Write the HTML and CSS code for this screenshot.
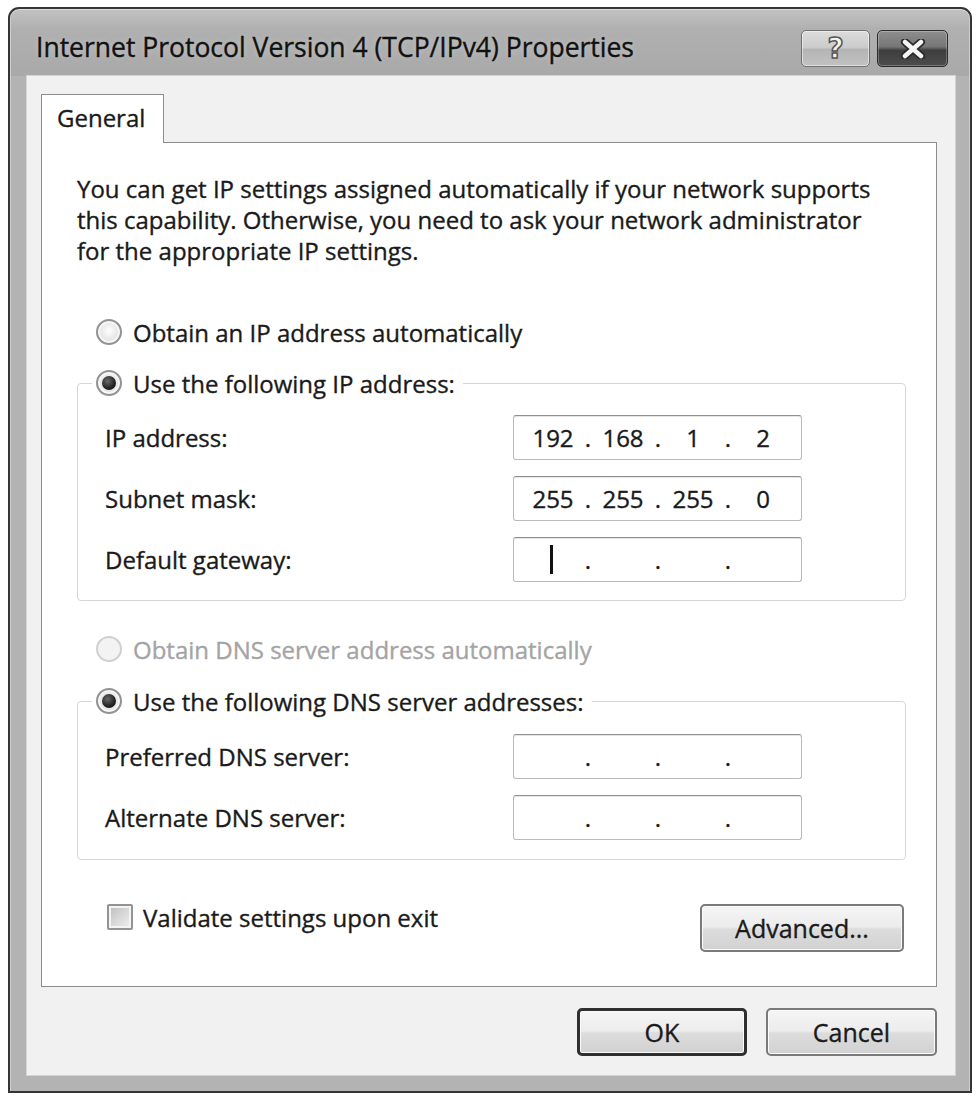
FILE: index.html
```html
<!DOCTYPE html>
<html lang="en">
<head>
<meta charset="utf-8">
<title>Internet Protocol Version 4 (TCP/IPv4) Properties</title>
<link rel="stylesheet" href="styles.css">
</head>
<body>
<div class="window">
  <div class="titlebar">
    <div class="title">Internet Protocol Version 4 (TCP/IPv4) Properties</div>
    <div class="caption-btns">
      <div class="cap help"><span class="qmark">?</span></div>
      <div class="cap close">
        <svg width="26" height="20" viewBox="0 0 26 20">
          <path d="M5 3 L21 17 M21 3 L5 17" stroke="#2a2a2a" stroke-width="8" stroke-linecap="round" fill="none"/>
          <path d="M5 3 L21 17 M21 3 L5 17" stroke="#f4f4f4" stroke-width="4.5" stroke-linecap="round" fill="none"/>
        </svg>
      </div>
    </div>
  </div>
  <div class="client">
    <div class="tabs"><div class="tab">General</div></div>
    <div class="panel">
      <p class="intro">You can get IP settings assigned automatically if your network supports<br>this capability. Otherwise, you need to ask your network administrator<br>for the appropriate IP settings.</p>

      <div class="radio-row first"><span class="radio"></span><span>Obtain an IP address automatically</span></div>

      <fieldset class="group g-ip">
        <legend><span class="radio checked"></span><span>Use the following IP address:</span></legend>
        <div class="field-row">
          <span class="flabel">IP address:</span>
          <div class="ipbox"><span class="oct">192</span><span class="dot">.</span><span class="oct">168</span><span class="dot">.</span><span class="oct">1</span><span class="dot">.</span><span class="oct">2</span></div>
        </div>
        <div class="field-row">
          <span class="flabel">Subnet mask:</span>
          <div class="ipbox"><span class="oct">255</span><span class="dot">.</span><span class="oct">255</span><span class="dot">.</span><span class="oct">255</span><span class="dot">.</span><span class="oct">0</span></div>
        </div>
        <div class="field-row">
          <span class="flabel">Default gateway:</span>
          <div class="ipbox"><span class="oct"><span class="caret"></span></span><span class="dot">.</span><span class="oct"></span><span class="dot">.</span><span class="oct"></span><span class="dot">.</span><span class="oct"></span></div>
        </div>
      </fieldset>

      <div class="radio-row disabled dns-auto"><span class="radio"></span><span>Obtain DNS server address automatically</span></div>

      <fieldset class="group g-dns">
        <legend><span class="radio checked"></span><span>Use the following DNS server addresses:</span></legend>
        <div class="field-row">
          <span class="flabel">Preferred DNS server:</span>
          <div class="ipbox"><span class="oct"></span><span class="dot">.</span><span class="oct"></span><span class="dot">.</span><span class="oct"></span><span class="dot">.</span><span class="oct"></span></div>
        </div>
        <div class="field-row">
          <span class="flabel">Alternate DNS server:</span>
          <div class="ipbox"><span class="oct"></span><span class="dot">.</span><span class="oct"></span><span class="dot">.</span><span class="oct"></span><span class="dot">.</span><span class="oct"></span></div>
        </div>
      </fieldset>

      <div class="bottom-row">
        <label class="check"><span class="box"></span><span>Validate settings upon exit</span></label>
        <button class="btn adv">Advanced...</button>
      </div>
    </div>
    <div class="dialog-btns">
      <button class="btn ok">OK</button>
      <button class="btn cancel">Cancel</button>
    </div>
  </div>
</div>
</body>
</html>
```

FILE: styles.css
```css
* { box-sizing: border-box; }

html, body {
  margin: 0;
  padding: 0;
  background: #ffffff;
}

body {
  font-family: "Open Sans", "Noto Sans", sans-serif;
  font-size: 24px;
  font-weight: 500;
  color: #1a1a1a;
  -webkit-text-stroke: 0.35px currentColor;
}

.window {
  margin: 7px 0 0 8px;
  width: 964px;
  height: 1086px;
  border: 2px solid #353535;
  border-radius: 11px 11px 0 0;
  background: linear-gradient(#c2c2c2 0, #b0b0b0 20px, #a9a9a9 67px, #b3b3b3 67px, #b3b3b3 100%);
  padding: 0 15px 16px 17px;
  display: flex;
  flex-direction: column;
  box-shadow: inset 0 1px 0 #dedede, inset 1px 0 0 #cfcfcf, inset -1px 0 0 #cfcfcf;
}

.titlebar {
  height: 67px;
  display: flex;
  justify-content: space-between;
  align-items: flex-start;
  flex: none;
}

.title {
  margin: 23px 0 0 9px;
  font-size: 26.5px;
  line-height: 30px;
  color: #111;
  text-shadow: 0 0 6px rgba(255, 255, 255, 0.35);
}

.caption-btns {
  display: flex;
  gap: 7px;
  margin: 21px 7px 0 0;
}

.cap {
  height: 37px;
  border-radius: 5px;
  display: flex;
  align-items: center;
  justify-content: center;
}

.help {
  width: 69px;
  border: 1px solid #707070;
  background: linear-gradient(#dcdcdc 0, #cbcbcb 48%, #b4b4b4 52%, #c2c2c2 100%);
  box-shadow: inset 0 0 0 1px rgba(255, 255, 255, 0.5);
}

.qmark {
  font-family: "DejaVu Sans", sans-serif;
  font-weight: bold;
  font-size: 28px;
  line-height: 30px;
  color: #f2f2f2;
  -webkit-text-stroke: 1.5px #555555;
}

.close {
  width: 71px;
  border: 1px solid #2b2b2b;
  background: linear-gradient(#8e8e8e 0, #767676 45%, #3e3e3e 55%, #4c4c4c 100%);
  box-shadow: inset 0 0 0 1px rgba(255, 255, 255, 0.25);
}

.client {
  flex: 1;
  background: #f1f1f1;
  padding: 18px 18px 0 14px;
  display: flex;
  flex-direction: column;
  box-shadow: 0 0 0 1px #d4d4d4;
}

.tabs {
  display: flex;
  flex: none;
}

.tab {
  width: 123px;
  height: 49px;
  margin-bottom: -1px;
  background: #ffffff;
  border: 1px solid #8d8d8d;
  border-bottom: none;
  padding-left: 15px;
  line-height: 46px;
  position: relative;
  z-index: 1;
}

.panel {
  height: 845px;
  flex: none;
  background: #ffffff;
  border: 1px solid #8d8d8d;
  padding: 0 30px 0 35px;
}

.intro {
  margin: 30px 0 0 0;
  line-height: 31px;
  white-space: nowrap;
}

.radio-row {
  display: flex;
  align-items: center;
  gap: 11px;
  height: 30px;
  margin-left: 19px;
}

.radio-row.first { margin-top: 51px; }
.radio-row.dns-auto { margin-top: 33px; }

.radio-row.disabled { color: #a4a4a4; }

.radio {
  width: 26px;
  height: 26px;
  flex: none;
  border-radius: 50%;
  border: 2px solid #939393;
  background: radial-gradient(circle at 50% 45%, #ffffff 0, #e6e6e6 55%, #c8c8c8 100%);
  box-shadow: inset 0 0 0 2px #f6f6f6;
  display: flex;
  align-items: center;
  justify-content: center;
}

.radio.checked::after {
  content: "";
  width: 14px;
  height: 14px;
  border-radius: 50%;
  background: radial-gradient(circle at 40% 35%, #6a6a6a 0, #222 60%, #0e0e0e 100%);
}

.disabled .radio {
  border-color: #d0d0d0;
  background: #f3f3f3;
  box-shadow: none;
}

.group {
  margin: 0;
  min-width: 0;
  border: 1px solid #d6d6d6;
  border-radius: 4px;
  padding: 17px 103px 18px 27px;
  display: flex;
  flex-direction: column;
  gap: 16px;
}

.g-ip { margin-top: 21px; }
.g-dns { margin-top: 22px; padding-top: 18px; padding-bottom: 19px; }

.group legend {
  display: flex;
  align-items: center;
  gap: 11px;
  height: 30px;
  margin-left: -13px;
  padding: 0 8px 0 4px;
}

.field-row {
  display: flex;
  justify-content: space-between;
  align-items: center;
  height: 45px;
}

.ipbox {
  width: 289px;
  height: 45px;
  border: 1px solid #b9b9b9;
  border-top-color: #8f8f8f;
  border-radius: 3px;
  background: #ffffff;
  padding-left: 11px;
  display: flex;
  align-items: center;
  box-shadow: inset 0 1px 0 #e6e6e6;
}

.oct {
  width: 56px;
  text-align: center;
  line-height: 30px;
  height: 30px;
  display: flex;
  justify-content: center;
  align-items: center;
}

.dot {
  width: 14px;
  text-align: center;
  line-height: 30px;
}

.caret {
  width: 3px;
  height: 29px;
  background: #111;
  margin-left: -4px;
}

.bottom-row {
  margin-top: 44px;
  display: flex;
  justify-content: space-between;
  align-items: flex-start;
}

.check {
  display: flex;
  align-items: center;
  gap: 10px;
  margin-left: 30px;
  height: 26px;
}

.box {
  width: 26px;
  height: 26px;
  border: 2px solid #939393;
  border-radius: 2px;
  background: linear-gradient(135deg, #bdbdbd 0, #d8d8d8 50%, #efefef 100%);
  box-shadow: inset 0 0 0 2px #f4f4f4;
}

.btn {
  font-family: "Open Sans", "Noto Sans", sans-serif;
  font-size: 25px;
  font-weight: 500;
  color: #1a1a1a;
  -webkit-text-stroke: 0.35px currentColor;
  height: 48px;
  border: 2px solid #7a7a7a;
  border-radius: 5px;
  background: linear-gradient(#f5f5f5 0, #ececec 48%, #dddddd 52%, #d1d1d1 100%);
  box-shadow: inset 0 0 0 1px #fbfbfb;
  padding: 0;
  line-height: 42px;
}

.adv {
  width: 204px;
  margin-right: 2px;
}

.dialog-btns {
  margin-top: 21px;
  display: flex;
  justify-content: flex-end;
  gap: 19px;
}

.ok {
  width: 170px;
  border: 3px solid #2f2f2f;
}

.cancel {
  width: 171px;
}
```
